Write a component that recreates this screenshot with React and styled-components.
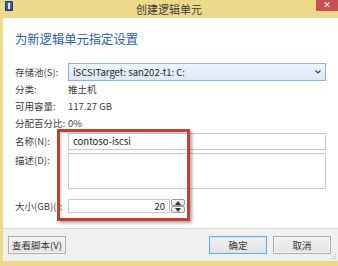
import React from "react";
import styled, { createGlobalStyle } from "styled-components";

const Global = createGlobalStyle`
  html, body { margin: 0; padding: 0; background: #ecd98a; }
  body { font-family: "Noto Sans CJK SC", "Noto Sans", sans-serif; }
`;

const Window = styled.div`
  position: relative;
  width: 338px;
  height: 266px;
  box-sizing: border-box;
  background: #ecd98a;
  padding: 0 0 5px 3px;
  display: flex;
  flex-direction: column;
  overflow: hidden;
`;

const TitleBar = styled.div`
  height: 18px;
  margin-left: -3px;
  display: flex;
  align-items: center;
  justify-content: center;
  position: relative;
  font-size: 11px;
  color: #3a3a3a;
`;

const AppIcon = styled.div`
  position: absolute;
  left: 5px;
  top: 1px;
  width: 8px;
  height: 10px;
  border-radius: 1px;
  background: linear-gradient(#4a6fc4, #2b4a9c);
  box-shadow: inset 0 0 0 1px #1f3a80;
  &::after {
    content: "";
    position: absolute;
    left: 3px;
    top: 2px;
    width: 2px;
    height: 6px;
    background: #e8eefc;
  }
`;

const CloseBtn = styled.div`
  position: absolute;
  right: 0;
  top: 0;
  width: 22px;
  height: 11px;
  background: #c75050;
  color: #fff;
  font-size: 9px;
  font-weight: bold;
  line-height: 10px;
  text-align: center;
  font-family: "DejaVu Sans", sans-serif;
`;

const Client = styled.div`
  flex: 1;
  background: #fff;
  display: flex;
  flex-direction: column;
`;

const Body = styled.div`
  flex: 1;
  padding: 13px 12px 0 12px;
  font-size: 9.5px;
  color: #3c3c3c;
`;

const Heading = styled.div`
  font-size: 12.3px;
  line-height: 16px;
  color: #2c5bb3;
  margin-bottom: 16px;
`;

const Form = styled.div`
  display: grid;
  grid-template-columns: 53px 1fr;
  align-items: center;
`;

const Label = styled.div`
  height: ${(p) => p.h || 17}px;
  line-height: ${(p) => (p.top ? 12 : p.h || 17)}px;
  margin-top: ${(p) => p.mt || 0}px;
  align-self: ${(p) => (p.top ? "start" : "center")};
  white-space: nowrap;
  padding-top: ${(p) => (p.top ? 1 : 0)}px;
  box-sizing: border-box;
`;

const Value = styled.div`
  height: 17px;
  line-height: 17px;
`;

const Select = styled.div`
  height: 18px;
  box-sizing: border-box;
  border: 1px solid #86b4e6;
  background: linear-gradient(#edf5fd, #dde9f7);
  display: flex;
  align-items: center;
  justify-content: space-between;
  padding: 0 4px 0 4px;
  color: #222;
`;

const Chevron = styled.svg`
  width: 6px;
  height: 4px;
`;

const Input = styled.div`
  height: ${(p) => p.h}px;
  margin-top: ${(p) => p.mt || 0}px;
  box-sizing: border-box;
  border: 1px solid #c8c8c8;
  background: #fff;
  padding: 0 4px;
  line-height: ${(p) => p.h - 2}px;
  color: #222;
  text-align: ${(p) => (p.right ? "right" : "left")};
`;

const SizeField = styled.div`
  margin-top: 10px;
  display: flex;
  align-items: center;
  gap: 1px;
`;

const SizeInput = styled(Input)`
  width: 102px;
  margin-top: 0;
`;

const Spinner = styled.div`
  width: 14px;
  height: 14px;
  display: flex;
  flex-direction: column;
`;

const SpinBtn = styled.div`
  flex: 1;
  border: 1px solid #9a9a9a;
  border-radius: 2px;
  background: linear-gradient(#fafafa, #e4e4e4);
  display: flex;
  align-items: center;
  justify-content: center;
`;

const Footer = styled.div`
  height: 33px;
  box-sizing: border-box;
  border-top: 1px solid #dadada;
  background: #f0f0f0;
  display: flex;
  align-items: center;
  padding: 0 7px 0 5px;
  position: relative;
  font-size: 9.5px;
`;

const Button = styled.div`
  height: 18px;
  box-sizing: border-box;
  width: ${(p) => p.w}px;
  margin-left: ${(p) => p.ml || 0}px;
  border: 1px solid ${(p) => (p.primary ? "#6fa8e8" : "#adadad")};
  box-shadow: inset 0 0 0 1px ${(p) => (p.primary ? "#d4e6fa" : "#f4f4f4")};
  background: linear-gradient(#f2f2f2, #e3e3e3);
  display: flex;
  align-items: center;
  justify-content: center;
  color: #333;
`;

const Spacer = styled.div`
  flex: 1;
`;

const Grip = styled.svg`
  position: absolute;
  right: 1px;
  bottom: 1px;
  width: 7px;
  height: 7px;
`;

const Callout = styled.div`
  position: absolute;
  left: 57px;
  top: 129px;
  width: 133px;
  height: 92px;
  box-sizing: border-box;
  border: 3px solid #c4402e;
  box-shadow: 2px 2px 3px rgba(0, 0, 0, 0.35), inset 1px 1px 2px rgba(0, 0, 0, 0.2);
  pointer-events: none;
`;

const Arrow = ({ up }) => (
  <svg width="6" height="4" viewBox="0 0 6 4">
    <path d={up ? "M0 4 L3 0 L6 4 Z" : "M0 0 L3 4 L6 0 Z"} fill="#333" />
  </svg>
);

export default function App() {
  return (
    <Window>
      <Global />
      <TitleBar>
        <AppIcon />
        创建逻辑单元
        <CloseBtn>✕</CloseBtn>
      </TitleBar>
      <Client>
        <Body>
          <Heading>为新逻辑单元指定设置</Heading>
          <Form>
            <Label h={18}>存储池(S):</Label>
            <Select>
              <span>iSCSITarget: san202-t1: C:</span>
              <Chevron viewBox="0 0 6 4">
                <path d="M0.5 0.5 L3 3 L5.5 0.5" stroke="#444" strokeWidth="1.2" fill="none" />
              </Chevron>
            </Select>
            <Label>分类:</Label>
            <Value>推土机</Value>
            <Label>可用容量:</Label>
            <Value>117.27 GB</Value>
            <Label>分配百分比:</Label>
            <Value>0%</Value>
            <Label mt={1}>名称(N):</Label>
            <Input h={17} mt={1}>contoso-iscsi</Input>
            <Label h={36} mt={3} top>描述(D):</Label>
            <Input h={36} mt={3} />
            <Label mt={10} h={14}>大小(GB)():</Label>
            <SizeField>
              <SizeInput h={14} right>20</SizeInput>
              <Spinner>
                <SpinBtn><Arrow up /></SpinBtn>
                <SpinBtn><Arrow /></SpinBtn>
              </Spinner>
            </SizeField>
          </Form>
        </Body>
        <Footer>
          <Button w={58}>查看脚本(V)</Button>
          <Spacer />
          <Button w={58} primary>确定</Button>
          <Button w={58} ml={6}>取消</Button>
          <Grip viewBox="0 0 7 7">
            <rect x="5" y="1" width="1" height="1" fill="#bbb" />
            <rect x="3" y="3" width="1" height="1" fill="#bbb" />
            <rect x="5" y="3" width="1" height="1" fill="#bbb" />
            <rect x="1" y="5" width="1" height="1" fill="#bbb" />
            <rect x="3" y="5" width="1" height="1" fill="#bbb" />
            <rect x="5" y="5" width="1" height="1" fill="#bbb" />
          </Grip>
        </Footer>
      </Client>
      <Callout />
    </Window>
  );
}
